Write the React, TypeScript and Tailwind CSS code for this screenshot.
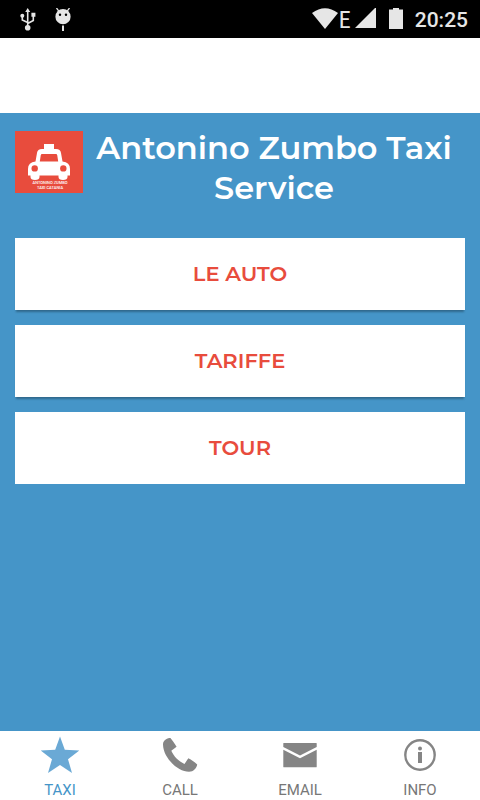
import React from "react";

const menuItems = ["Le auto", "Tariffe", "Tour"];

const tabs = [
  { name: "Taxi", path: "#taxi", icon: <StarIcon /> },
  { name: "Call", path: "#call", icon: <PhoneIcon /> },
  { name: "Email", path: "#email", icon: <MailIcon /> },
  { name: "Info", path: "#info", icon: <InfoIcon /> },
];

function StarIcon() {
  return (
    <svg className="h-10 w-10" viewBox="0 0 40 40" fill="#6aa9d5" aria-hidden="true">
      <path d="M20 1.5 24.8 14.8 39.3 15.4 28 24.2 32 38 20 30 8 38 12 24.2.7 15.4 15.2 14.8Z" />
    </svg>
  );
}

function PhoneIcon() {
  return (
    <svg className="h-10 w-10" viewBox="0 0 40 40" fill="#858585" aria-hidden="true">
      <path d="M4.5 5.5C6.4 3.5 8.3 2.7 10.4 3 12 5 15 9 16.6 11.8L11.3 15.8C13.8 21.3 18.5 26.3 24.5 29L28.3 23.2C31 24.5 34.7 27 37.2 29.5 36.5 33.5 33.5 36.6 29 36.8 17.5 36.5 3.3 23 3 9.6 3 8 3.4 6.6 4.5 5.5Z" />
    </svg>
  );
}

function MailIcon() {
  return (
    <svg className="h-10 w-10" viewBox="0 0 40 40" fill="#858585" aria-hidden="true">
      <path d="M3.3 8.5Q3.3 8 4 8H36Q36.7 8 36.7 8.5V12L20 20.5 3.3 12Z" />
      <path d="M3.3 14.8 20 23.3 36.7 14.8V31.8Q36.7 32.3 36 32.3H4Q3.3 32.3 3.3 31.8Z" />
    </svg>
  );
}

function InfoIcon() {
  return (
    <svg className="h-10 w-10" viewBox="0 0 40 40" aria-hidden="true">
      <circle cx="20" cy="20" r="14.7" fill="none" stroke="#858585" strokeWidth="2.4" />
      <circle cx="20" cy="13.4" r="2" fill="#858585" />
      <path d="M18 17H22V28H18Z" fill="#858585" />
    </svg>
  );
}

function StatusBar() {
  return (
    <div className="flex h-[38px] items-center justify-between bg-black pt-0.5 pr-3 pl-4 text-[#e6e6e6]">
      <div className="flex items-center gap-3">
        <svg className="h-6 w-6" viewBox="0 0 24 24" fill="none" stroke="currentColor" strokeWidth="1.6" aria-hidden="true">
          <path d="M11.7 20V3M11.7 15.5 17.3 12.5V8M11.7 14.5 6.3 12V8" />
          <circle cx="11.7" cy="19.7" r="2.8" fill="currentColor" stroke="none" />
          <circle cx="6.3" cy="7.7" r="2" fill="currentColor" stroke="none" />
          <path d="M15.4 4.7H19.4V8.7H15.4ZM9.2 4 11.7 0 14.2 4Z" fill="currentColor" stroke="none" />
        </svg>
        <svg className="h-6 w-6" viewBox="0 0 24 24" fill="currentColor" aria-hidden="true">
          <circle cx="11" cy="8.7" r="7.6" />
          <path d="M4.5 0 7 3.3M17.5 0 15 3.3" stroke="currentColor" strokeWidth="1.3" />
          <path d="M10 17.5H12V23H10Z" />
          <circle cx="8" cy="6.7" r="1.2" fill="#000" />
          <circle cx="14" cy="6.7" r="1.2" fill="#000" />
        </svg>
      </div>
      <div className="flex items-center">
        <svg className="h-6 w-[26px]" viewBox="0 0 26 24" fill="currentColor" aria-hidden="true">
          <path d="M0 5Q13-4.5 26 5L13 21Z" />
        </svg>
        <span className="ml-px font-['Roboto_Condensed','Roboto',sans-serif] text-2xl leading-6">E</span>
        <svg className="ml-1 h-6 w-[22px]" viewBox="0 0 22 24" fill="currentColor" aria-hidden="true">
          <path d="M0 20H21V-1Z" />
        </svg>
        <svg className="ml-3 h-6 w-[14px]" viewBox="0 0 14 24" fill="currentColor" aria-hidden="true">
          <path d="M0 1.5H4V-.5H10V1.5H14V21H0Z" />
        </svg>
        <time className="ml-3 font-['Roboto',sans-serif] text-[21px] leading-6 font-medium">20:25</time>
      </div>
    </div>
  );
}

function Logo() {
  return (
    <svg className="mt-[3px] h-[62px] w-[68px] shrink-0 bg-[#e84c3d]" viewBox="0 0 68 62" fill="#fff" role="img" aria-label="Antonino Zumbo Taxi">
      <path
        fillRule="evenodd"
        d="M29 13H39V18H41Q45.5 18 46 22L47.5 30.5Q55 31 55 38V44.5H52.5V46Q52.5 49 48 49T43.5 46V44.5H24.5V46Q24.5 49 20 49T15.5 46V44.5H13V38Q13 31 20.5 30.5L22 22Q22.5 18 27 18H29ZM27 23Q26 23 25.8 24L24.8 30.5H43.2L42.2 24Q42 23 41 23Z"
      />
      <circle cx="19.7" cy="37.4" r="3.2" fill="#e84c3d" />
      <circle cx="48.3" cy="37.4" r="3.2" fill="#e84c3d" />
      <g fontFamily="Roboto, sans-serif" fontWeight="500" fontSize="4" textAnchor="middle">
        <text x="35" y="53">ANTONINO ZUMBO</text>
        <text x="35" y="58">TAXI CATANIA</text>
      </g>
    </svg>
  );
}

export default function App() {
  return (
    <div className="flex min-h-screen flex-col bg-white">
      <StatusBar />
      <main className="mt-[75px] flex-1 bg-[#4595c8] p-[15px] font-['Montserrat','Inter',sans-serif]">
        <header className="mb-[30px] flex items-start">
          <Logo />
          <h1 className="flex-1 text-center text-[32px] leading-10 font-semibold text-white">
            Antonino Zumbo Taxi Service
          </h1>
        </header>
        <div className="flex flex-col gap-[15px]">
          {menuItems.map((item) => (
            <button
              key={item}
              type="button"
              className="h-[72px] bg-white text-[21px] font-semibold text-[#e84c3d] uppercase shadow-[0_3px_2px_-1px_rgba(0,0,0,0.3)] last:shadow-none"
            >
              {item}
            </button>
          ))}
        </div>
      </main>
      <nav className="grid h-[69px] grid-cols-4 bg-white font-['Roboto',sans-serif] text-[15px]">
        {tabs.map((tab, i) => (
          <a
            key={tab.path}
            href={tab.path}
            className={`flex flex-col items-center gap-1 pt-1 uppercase ${
              i === 0 ? "text-[#4595c8]" : "text-[#777]"
            }`}
          >
            {tab.icon}
            <span className="leading-[22px]">{tab.name}</span>
          </a>
        ))}
      </nav>
    </div>
  );
}
